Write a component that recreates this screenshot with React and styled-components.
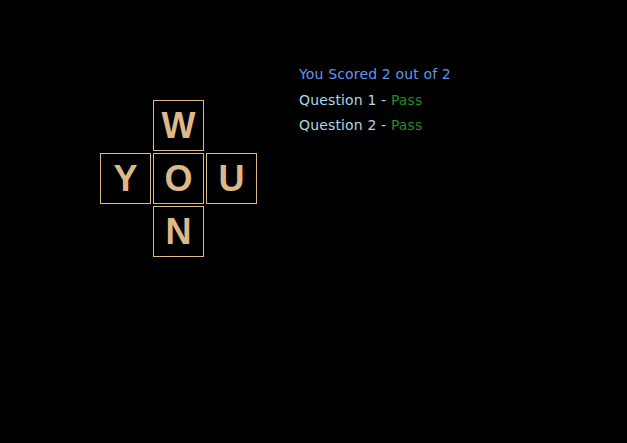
import React from 'react'
import styled, { createGlobalStyle } from 'styled-components'

const GlobalStyle = createGlobalStyle`
  html, body {
    margin: 0;
    padding: 0;
    background: #000;
  }
`

const Page = styled.div`
  display: flex;
  align-items: flex-start;
  width: 627px;
  height: 443px;
  background: #000;
  box-sizing: border-box;
  padding: 62px 0 0 100px;
`

const Board = styled.div`
  display: grid;
  grid-template-columns: repeat(3, 51px);
  grid-template-rows: repeat(3, 51px);
  gap: 2px;
  margin-top: 38px;
`

const Tile = styled.div`
  grid-column: ${props => props.col};
  grid-row: ${props => props.row};
  display: flex;
  align-items: center;
  justify-content: center;
  border: 1px solid #deb887;
  box-sizing: border-box;
  color: #deb887;
  font-family: 'Liberation Sans', Arial, sans-serif;
  font-weight: bold;
  font-size: 36px;
`

const Results = styled.div`
  display: flex;
  flex-direction: column;
  margin-left: 42px;
  font-family: 'DejaVu Sans', Verdana, sans-serif;
  font-size: 14px;
  line-height: 25px;
  letter-spacing: 0.15px;
`

const Line = styled.div`
  color: ${props => props.color || '#add8e6'};
`

const Heading = styled(Line)`
  margin-bottom: 1px;
`

const Pass = styled.span`
  color: #228b22;
`

const tiles = [
  { letter: 'W', col: 2, row: 1 },
  { letter: 'Y', col: 1, row: 2 },
  { letter: 'O', col: 2, row: 2 },
  { letter: 'U', col: 3, row: 2 },
  { letter: 'N', col: 2, row: 3 }
]

const questions = [1, 2]

export default function App() {
  return (
    <>
      <GlobalStyle />
      <Page>
        <Board>
          {tiles.map(t => (
            <Tile key={t.letter + t.col + t.row} col={t.col} row={t.row}>
              {t.letter}
            </Tile>
          ))}
        </Board>
        <Results>
          <Heading color='#6495ed'>You Scored 2 out of 2</Heading>
          {questions.map(q => (
            <Line key={q}>
              Question {q} - <Pass>Pass</Pass>
            </Line>
          ))}
        </Results>
      </Page>
    </>
  )
}
